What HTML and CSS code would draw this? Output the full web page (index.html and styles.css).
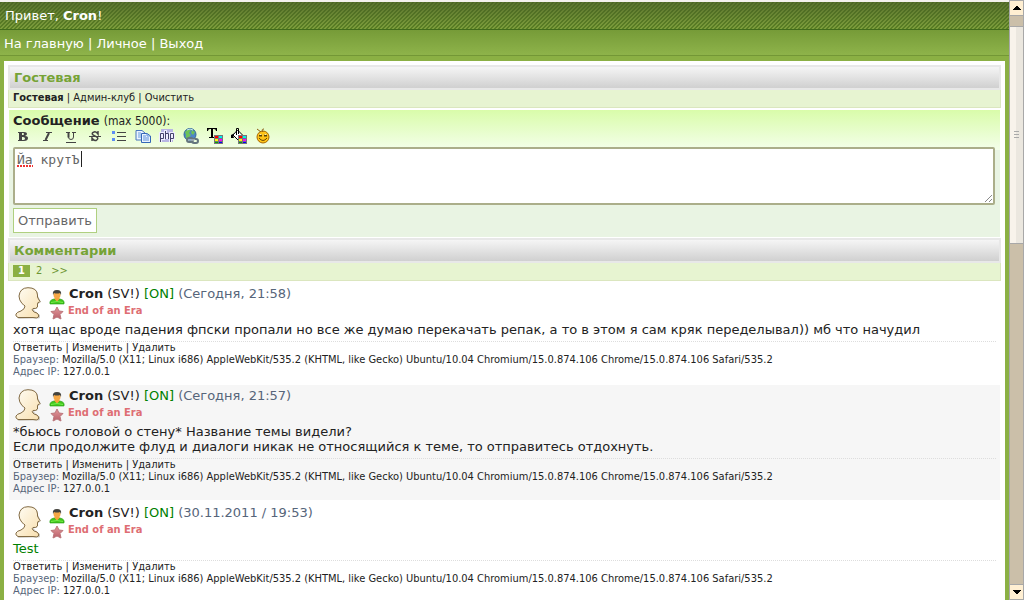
FILE: index.html
```
<!DOCTYPE html>
<html lang="ru">

<head>
    <meta charset="utf-8">
    <title>Гостевая</title>
    <link rel="stylesheet" href="styles.css">
</head>

<body>

    <!-- общие иконки -->
    <svg class="sprite" aria-hidden="true">
        <defs>
            <linearGradient id="skin" x1="0" y1="0" x2="1" y2="1">
                <stop offset="0" stop-color="#fffdf5"/>
                <stop offset="1" stop-color="#f8dfae"/>
            </linearGradient>
            <linearGradient id="pink" x1="0" y1="0" x2="0" y2="1">
                <stop offset="0" stop-color="#e59a9c"/>
                <stop offset="1" stop-color="#b9606a"/>
            </linearGradient>
            <symbol id="avatar" viewBox="0 0 32 32">
                <path d="M6 32C3 31 4 28 9 25L13 20L8 14Q5 2 16 1Q25 1 25 9L28 15L25 17L24 22H21Q21 24 27 28L27 31Q25 32 20 31.500Z" fill="#aaa69c" opacity=".5"/>
                <path d="M5 30.500Q2 29 3 27Q4 25 8 24Q12 22 12 19Q11 18 9 16.500Q6 13 6 9Q7 .8 15 .7Q24 .7 24.500 8Q24 10 25.500 12L27 14.500Q26.500 15.500 25 15.500L24.500 17L24.500 20Q23 22 20 21.500Q18.500 22.500 20 24Q21 25.500 24 26Q26.500 28 25.500 30Q24 31.500 20 30.500Z" fill="url(#skin)" stroke="#826a43"/>
            </symbol>
            <symbol id="user" viewBox="0 0 16 16">
                <path d="M1 15Q0 11 5 10H11Q16 11 15 15Z" fill="#42c51d" stroke="#219a12" stroke-width=".6"/>
                <path d="M5.500 9H10.500V10L8 12.500L5.500 10Z" fill="#f7a43b"/>
                <circle cx="8" cy="6" r="3.500" fill="#f6a846"/>
                <path d="M4 6Q3 1 8 1Q13 1 12 6L11 4Q8 5 5 4Z" fill="#44433d"/>
                <path d="M2 13.500Q8 11.500 14 13.500" stroke="#75ed4b" fill="none"/>
            </symbol>
            <symbol id="star" viewBox="0 0 16 16">
                <path d="M8 2L10 6L14 6.500L11 9.500L12 14L8 12L4 14L5 9.500L2 6.500L6 6Z" fill="url(#pink)" stroke="#bc777c"/>
            </symbol>
            <symbol id="palette" viewBox="0 0 9 9">
                <path d="M0 0H9V9H0Z" fill="#777"/>
                <path d="M1 1H4V3H1Z" fill="#f00"/><path d="M5 1H8V3H5Z" fill="#0ee"/>
                <path d="M1 4H4V6H1Z" fill="#ff0"/><path d="M5 4H8V6H5Z" fill="#f0f"/>
                <path d="M1 7H4V8H1Z" fill="#0a0"/><path d="M5 7H8V8H5Z" fill="#00f"/>
            </symbol>
        </defs>
    </svg>

    <div class="page">
        <header class="header">Привет, <b>Cron</b>!</header>
        <nav class="navbar"><a href="#">На главную</a> | <a href="#">Личное</a> | <a href="#">Выход</a></nav>

        <main class="main">
            <h1 class="title">Гостевая</h1>
            <div class="bar"><b>Гостевая</b> | <a href="#">Админ-клуб</a> | <a href="#">Очистить</a></div>

            <form class="form">
                <label class="form-label" for="msg"><b>Сообщение</b> <small>(max 5000):</small></label>
                <div class="tools">
                    <button type="button" class="tool" aria-label="Жирный"><svg viewBox="0 0 16 16"><path d="M3 4H9Q12 4 12 6Q12 7 10 8Q13 8 13 10Q13 13 9 13H3V12H4V5H3ZM7 5V7H8Q9 7 9 6T8 5ZM7 9V12H8Q10 12 10 10.500T8 9Z" fill="#444" fill-rule="evenodd"/></svg></button>
                    <button type="button" class="tool" aria-label="Курсив"><svg viewBox="0 0 16 16"><path d="M7 4.500H13M4 12.500H9" stroke="#444" fill="none"/><path d="M10 5L6.500 12" stroke="#444" stroke-width="2"/></svg></button>
                    <button type="button" class="tool" aria-label="Подчёркнутый"><svg viewBox="0 0 16 16"><path d="M3 4.500H7M9 4.500H13M10.500 4V9Q10.500 11.500 8 11.500Q5.500 11.500 5.500 9V4M3 14.500H13" stroke="#444" fill="none"/><path d="M5.500 5V9.500" stroke="#444" stroke-width="2"/></svg></button>
                    <button type="button" class="tool" aria-label="Зачёркнутый"><svg viewBox="0 0 16 16"><path d="M11 3V6Q9 3 7 4Q4 5 6 7L10 9Q12 11 9 12.500Q7 13 5 10V13" stroke="#444" stroke-width="1.500" fill="none"/><path d="M2 8.500H14" stroke="#444"/></svg></button>
                    <button type="button" class="tool" aria-label="Список"><svg viewBox="0 0 16 16"><path d="M1 3H4V6H1ZM1 10H4V13H1Z" fill="#5c8df5"/><path d="M6 4.500H15M6 8.500H15M6 12.500H15" stroke="#444"/></svg></button>
                    <button type="button" class="tool" aria-label="Цитата"><svg viewBox="0 0 16 16"><path d="M1 2.500H7L10 5V12H1Z" fill="#eaf3ff" stroke="#4977bd"/><path d="M3 5H6M3 7H6M3 9H6" stroke="#6b9ee0"/><path d="M6.500 5.500H12L15.500 8V14.500H6.500Z" fill="#eaf3ff" stroke="#3467b7"/><path d="M12 5.500V8H15M8 8H11M8 10H14M8 12H14" fill="none" stroke="#5e91dc"/></svg></button>
                    <button type="button" class="tool" aria-label="Код php"><svg viewBox="0 0 16 16"><rect x="2" y="1" width="12" height="13" fill="#b9b6e4"/><path d="M1.500 14V5.500H4.500V10.500H2M6.500 2V11M6.500 6.500H9.500V11M11.500 14V5.500H14.500V10.500H12" fill="none" stroke="#eeecff" stroke-width="3"/><path d="M1.500 14V5.500H4.500V10.500H2M6.500 3V11M6.500 5.500H9.500V11M11.500 14V5.500H14.500V10.500H12" fill="none" stroke="#45436c"/></svg></button>
                    <button type="button" class="tool" aria-label="Ссылка"><svg viewBox="0 0 16 16"><circle cx="7" cy="6.500" r="6" fill="#4d86c6" stroke="#316794"/><path d="M2 4Q5 0 8 2L6 5L8 7L4 11Q2 9 3 7ZM9 2L12 4L10 7L8 5Z" fill="#6cc256"/><path d="M4 2Q7 0 10 2" stroke="#c4e7f0" fill="none"/><rect x="4" y="10" width="6" height="4" rx="2" fill="none" stroke="#65757e" stroke-width="2"/><rect x="9" y="11" width="6" height="4" rx="2" fill="none" stroke="#65757e" stroke-width="2"/><path d="M5 12H12" stroke="#ccd5dc"/></svg></button>
                    <button type="button" class="tool" aria-label="Цвет текста"><svg viewBox="0 0 16 16"><path d="M0 0H10V3H9Q9 1 7 1H6V9H8V10H2V9H4V1H3Q1 1 1 3H0Z" fill="#000"/><use href="#palette" x="7" y="7" width="9" height="9"/></svg></button>
                    <button type="button" class="tool" aria-label="Цвет фона"><svg viewBox="0 0 16 16"><path d="M6.500 2L12 7.500L7 12L2 7L6.500 2" fill="#fff" stroke="#000"/><path d="M0 7L4 5L2 7L3 10H0Z" fill="#000"/><path d="M5.500 7V.5H7.500V6" stroke="#000" fill="none"/><use href="#palette" x="7" y="7" width="9" height="9"/></svg></button>
                    <button type="button" class="tool" aria-label="Смайлы"><svg viewBox="0 0 16 16"><circle cx="8" cy="9" r="6" fill="#ffc419" stroke="#a86800"/><path d="M2 1L6 4M9 1Q6 1 8 4" stroke="#8b5c10" fill="none"/><path d="M4 7.500H7M9 7.500H12" stroke="#5c4200" stroke-width="2"/><path d="M4.500 6.500H6.500M9.500 6.500H11.500" stroke="#fff0aa"/><path d="M4 10Q8 15 12 10" stroke="#6b4700" fill="none"/></svg></button>
                </div>
                <div class="field">
                    <textarea class="message" id="msg" spellcheck="false">Йа крутЪ</textarea>
                    <span class="misspell"></span>
                    <span class="caret"></span>
                    <svg class="grip" viewBox="0 0 9 9"><path d="M1 8L8 1M5 8L8 5" stroke="#555" stroke-dasharray="1 .4"/></svg>
                </div>
                <button type="button" class="send">Отправить</button>
            </form>

            <h2 class="title">Комментарии</h2>
            <div class="bar pager"><b class="current">1</b><a href="#">2</a><a href="#">&gt;&gt;</a></div>

            <article class="post">
                <div class="post-head">
                    <svg class="avatar"><use href="#avatar"/></svg>
                    <div>
                        <div class="author"><svg class="icon"><use href="#user"/></svg><span><b>Cron</b> (SV!) <span class="online">[ON]</span> <span class="muted">(Сегодня, 21:58)</span></span></div>
                        <div class="rank"><svg class="icon"><use href="#star"/></svg>End of an Era</div>
                    </div>
                </div>
                <p class="text">хотя щас вроде падения фпски пропали но все же думаю перекачать репак, а то в этом я сам кряк переделывал)) мб что начудил</p>
                <div class="info">
                    <div><a href="#">Ответить</a> | <a href="#">Изменить</a> | <a href="#">Удалить</a></div>
                    <div><span class="muted">Браузер:</span> Mozilla/5.0 (X11; Linux i686) AppleWebKit/535.2 (KHTML, like Gecko) Ubuntu/10.04 Chromium/15.0.874.106 Chrome/15.0.874.106 Safari/535.2</div>
                    <div><span class="muted">Адрес IP:</span> 127.0.0.1</div>
                </div>
            </article>

            <article class="post even">
                <div class="post-head">
                    <svg class="avatar"><use href="#avatar"/></svg>
                    <div>
                        <div class="author"><svg class="icon"><use href="#user"/></svg><span><b>Cron</b> (SV!) <span class="online">[ON]</span> <span class="muted">(Сегодня, 21:57)</span></span></div>
                        <div class="rank"><svg class="icon"><use href="#star"/></svg>End of an Era</div>
                    </div>
                </div>
                <p class="text">*бьюсь головой о стену* Название темы видели?<br>Если продолжите флуд и диалоги никак не относящийся к теме, то отправитесь отдохнуть.</p>
                <div class="info">
                    <div><a href="#">Ответить</a> | <a href="#">Изменить</a> | <a href="#">Удалить</a></div>
                    <div><span class="muted">Браузер:</span> Mozilla/5.0 (X11; Linux i686) AppleWebKit/535.2 (KHTML, like Gecko) Ubuntu/10.04 Chromium/15.0.874.106 Chrome/15.0.874.106 Safari/535.2</div>
                    <div><span class="muted">Адрес IP:</span> 127.0.0.1</div>
                </div>
            </article>

            <article class="post">
                <div class="post-head">
                    <svg class="avatar"><use href="#avatar"/></svg>
                    <div>
                        <div class="author"><svg class="icon"><use href="#user"/></svg><span><b>Cron</b> (SV!) <span class="online">[ON]</span> <span class="muted">(30.11.2011 / 19:53)</span></span></div>
                        <div class="rank"><svg class="icon"><use href="#star"/></svg>End of an Era</div>
                    </div>
                </div>
                <p class="text online">Test</p>
                <div class="info">
                    <div><a href="#">Ответить</a> | <a href="#">Изменить</a> | <a href="#">Удалить</a></div>
                    <div><span class="muted">Браузер:</span> Mozilla/5.0 (X11; Linux i686) AppleWebKit/535.2 (KHTML, like Gecko) Ubuntu/10.04 Chromium/15.0.874.106 Chrome/15.0.874.106 Safari/535.2</div>
                    <div><span class="muted">Адрес IP:</span> 127.0.0.1</div>
                </div>
            </article>
        </main>
    </div>

    <!-- полоса прокрутки -->
    <div class="scroll">
        <button type="button" class="scroll-btn" aria-label="Вверх"><svg viewBox="0 0 8 5"><path d="M3 0H5V1H6V2H7V3H8V4H0V3H1V2H2V1H3Z"/></svg></button>
        <div class="track"><div class="thumb"><i></i><i></i><i></i></div></div>
        <button type="button" class="scroll-btn" aria-label="Вниз"><svg viewBox="0 0 8 5"><path d="M0 0H8V1H7V2H6V3H5V4H3V3H2V2H1V1H0Z"/></svg></button>
    </div>

</body>

</html>
```
FILE: styles.css
```
* {
    box-sizing: border-box;
}

body {
    margin: 0;
    height: 100vh;
    display: flex;
    overflow: hidden;
    background: #f3f1ec;
    color: #222;
    font-family: "DejaVu Sans", sans-serif;
    font-size: 13px;
    line-height: 15px;
}

a {
    color: inherit;
    text-decoration: none;
}

button {
    font-family: inherit;
    padding: 0;
}

.sprite {
    position: absolute;
    width: 0;
    height: 0;
}

.page {
    flex: 1;
    min-width: 0;
    margin-top: 2px;
    overflow: hidden;
    background: #8bb044;
}

/* шапка */
.header {
    height: 28px;
    padding: 6px 5px;
    color: #fff;
    border-bottom: 1px solid #416b1b;
    background: linear-gradient(rgba(65, 85, 35, 0.6), rgba(100, 140, 35, 0)),
        linear-gradient(135deg, #5a7f25 25%, #7d9e3c 25% 50%, #5a7f25 50% 75%, #7d9e3c 75%) 0 0 / 4px 4px;
}

.navbar {
    height: 26px;
    padding: 6px 4px;
    color: #fff;
    background: linear-gradient(#769b38, #8eb34a);
    border-bottom: 1px solid #739736;
}

.main {
    margin: 5px 4px 0;
    padding: 4px;
    background: #fff;
}

.title {
    margin: 0;
    height: 25px;
    padding: 3px 4px;
    color: #76a336;
    font-size: 13px;
    line-height: 15px;
    border: 2px solid #e8e8e8;
    background: linear-gradient(#f5f5f5, #d0d0d0);
}

.bar {
    height: 18px;
    padding: 1px 4px;
    font-family: "DejaVu Sans Condensed", "DejaVu Sans", sans-serif;
    font-size: 11px;
    line-height: 13px;
    background: #e7f4d1;
    border: 1px solid #dbe6bf;
    border-top: 0;
}

/* форма */
.form {
    margin: 2px 1px 1px;
    padding: 3px 4px 4px;
    background: linear-gradient(#d9fcaa, #f4ffea 40px, #e9f4e3 40px);
}

.form-label {
    display: block;
    height: 15px;
}

.form-label small {
    font-family: "DejaVu Sans Condensed", "DejaVu Sans", sans-serif;
    font-size: 12px;
}

.tools {
    display: flex;
    gap: 8px;
    padding: 0 2px 3px;
}

.tool {
    width: 16px;
    height: 16px;
    border: 0;
    background: none;
}

.tool svg {
    display: block;
    width: 16px;
    height: 16px;
}

.field {
    position: relative;
    margin-right: 1px;
}

.message {
    display: block;
    width: 100%;
    height: 58px;
    padding: 3px 2px;
    resize: none;
    color: #666;
    background: #fff;
    border: 2px solid #abae8a;
    border-radius: 2px;
    outline: 0;
    font-family: "DejaVu Sans Mono", monospace;
    font-size: 13px;
    line-height: 15px;
}

.misspell {
    position: absolute;
    left: 4px;
    top: 18px;
    width: 16px;
    height: 2px;
    background: repeating-linear-gradient(90deg, #e33 0 2px, #fff 2px 3px);
}

.caret {
    position: absolute;
    left: 68px;
    top: 4px;
    width: 1px;
    height: 16px;
    background: #222;
}

.grip {
    position: absolute;
    right: 2px;
    bottom: 2px;
    width: 9px;
    height: 9px;
}

.send {
    display: block;
    margin-top: 3px;
    height: 25px;
    padding: 0 4px;
    color: #666;
    background: #fff;
    border: 1px solid #b0d080;
    font-size: 13px;
}

.pager {
    display: flex;
    padding-top: 2px;
    color: #6d9432;
    line-height: 12px;
}

.pager a {
    margin-left: 6px;
}

.pager a + a {
    margin-left: 9px;
}

.current {
    width: 17px;
    height: 12px;
    color: #fff;
    text-align: center;
    background: #8bb044;
}

/* комментарии */
.post {
    margin: 2px 1px 0;
    padding: 2px 4px 5px;
}

.even {
    background: #f6f6f6;
}

.post-head {
    display: flex;
    gap: 4px;
    height: 37px;
}

.avatar {
    width: 32px;
    height: 32px;
    margin-top: 2px;
}

.icon {
    width: 16px;
    height: 16px;
    margin-right: 3px;
}

.author,
.rank {
    display: flex;
    height: 18px;
}

.author {
    padding-top: 1px;
}

.author .icon {
    margin-top: 3px;
    margin-right: 4px;
}

.rank {
    color: #de6e73;
    font-family: "DejaVu Sans Condensed", "DejaVu Sans", sans-serif;
    font-size: 11px;
    font-weight: bold;
}

.rank .icon {
    margin-top: 2px;
}

.online {
    color: #008000;
}

.muted {
    color: #56657a;
}

.text {
    margin: 0 0 4px;
}

.info {
    border-top: 1px dotted #ddd;
    font-family: "DejaVu Sans Condensed", "DejaVu Sans", sans-serif;
    font-size: 11px;
    line-height: 12px;
}

/* прокрутка */
.scroll {
    display: flex;
    flex-direction: column;
    width: 15px;
    background: #cbbfa9;
    border: 1px solid #a8a8a8;
}

.scroll-btn {
    display: flex;
    align-items: center;
    justify-content: center;
    height: 14px;
    background: #ffefd2;
    border: 0;
}

.scroll-btn svg {
    width: 8px;
    height: 5px;
}

.track {
    flex: 1;
    padding-top: 10px;
    border: solid #a8a8a8;
    border-width: 1px 0;
}

.thumb {
    display: flex;
    flex-direction: column;
    align-items: center;
    justify-content: center;
    gap: 2px;
    height: 39%;
    border: solid #a8a8a8;
    border-width: 1px 0;
    background: linear-gradient(90deg, #f8f3eb 50%, #ebe7df 50%);
}

.thumb i {
    width: 5px;
    height: 1px;
    background: #aaa;
}
```
